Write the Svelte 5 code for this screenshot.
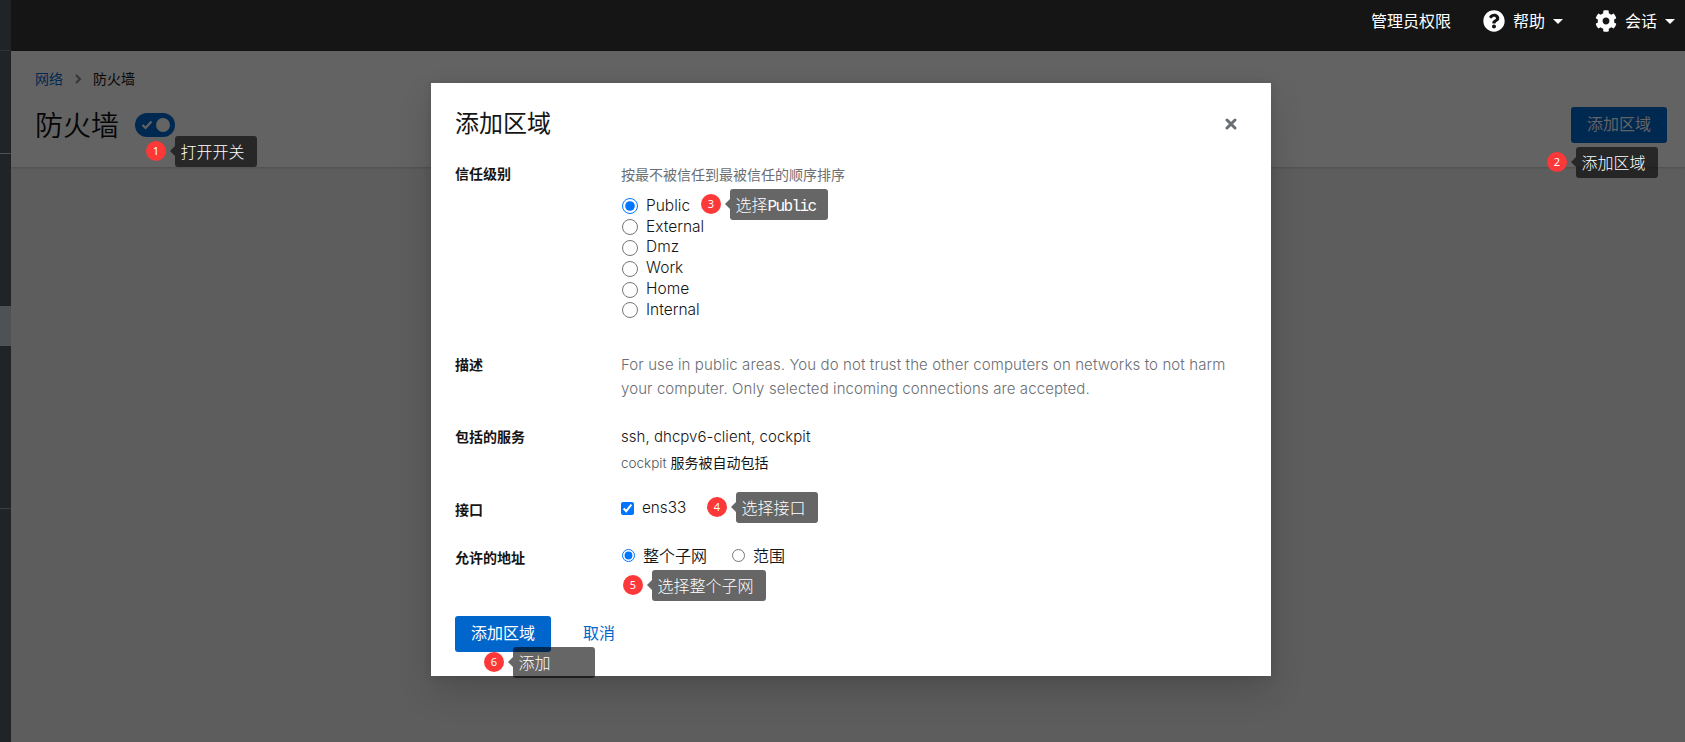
<script lang="ts">
	const zones = ['Public', 'External', 'Dmz', 'Work', 'Home', 'Internal'];

	let zone = $state('Public');
	let ens33 = $state(true);
	let addresses = $state('subnet');

	// Numbered walkthrough markers: dot position, label offset and label width
	const steps = [
		{ n: 1, text: '打开开关', x: 146, y: 141, lx: 175, ly: 136, w: 82 },
		{ n: 2, text: '添加区域', x: 1547, y: 152, lx: 1576, ly: 147, w: 82 },
		{ n: 3, text: '选择', latin: 'Public', x: 701, y: 194, lx: 730, ly: 189, w: 98 },
		{ n: 4, text: '选择接口', x: 707, y: 497, lx: 736, ly: 492, w: 82 },
		{ n: 5, text: '选择整个子网', x: 623, y: 575, lx: 652, ly: 570, w: 114 },
		{ n: 6, text: '添加', x: 484, y: 652, lx: 513, ly: 647, w: 82 }
	];
</script>

<div class="app">
	<nav class="sidebar">
		<div class="nav-host"></div>
		<div class="nav-search"></div>
		<div class="nav-group"></div>
		<div class="nav-current"></div>
		<div class="nav-rest"></div>
		<div class="nav-tools"></div>
	</nav>

	<div class="main">
		<header class="masthead">
			<span class="item"><span>管理员权限</span></span>
			<span class="item">
				<svg width="22" height="22" viewBox="0 0 512 512" fill="#fff">
					<path d="M504 256c0 137-111 248-248 248S8 393 8 256 119 8 256 8s248 111 248 248zM262.700 90c-54.500 0-89.300 23-116.500 63.800-3.500 5.300-2.400 12.400 2.700 16.300l34.700 26.300c5.200 3.900 12.600 3 16.700-2.100 17.900-22.700 30.100-35.800 57.300-35.800 20.400 0 45.700 13.100 45.700 33 0 15-12.400 22.700-32.500 34C247.100 238.500 216 254.900 216 296v4c0 6.600 5.400 12 12 12h56c6.600 0 12-5.400 12-12v-1.300c0-28.500 83.200-29.600 83.200-106.700 0-58-60.200-102-116.500-102zM256 338c-25.400 0-46 20.600-46 46s20.600 46 46 46 46-20.600 46-46-20.600-46-46-46z" />
				</svg>
				<span>帮助</span>
				<i class="caret"></i>
			</span>
			<span class="item">
				<svg width="22" height="22" viewBox="0 0 512 512" fill="#fff">
					<path d="M487.400 315.700l-42.600-24.600c4.300-23.200 4.300-47 0-70.200l42.600-24.600c4.900-2.800 7.100-8.600 5.500-14-11.100-35.600-30-67.800-54.700-94.600-3.800-4.100-10-5.100-14.800-2.300L380.800 110c-17.900-15.400-38.500-27.300-60.800-35.100V25.800c0-5.600-3.900-10.500-9.400-11.700-36.700-8.200-74.300-7.800-109.200 0-5.500 1.200-9.400 6.100-9.400 11.700V75c-22.200 7.900-42.800 19.800-60.800 35.100L88.700 85.500c-4.900-2.800-11-1.900-14.800 2.300-24.700 26.700-43.600 58.900-54.700 94.600-1.700 5.400.6 11.200 5.500 14L67.300 221c-4.300 23.200-4.300 47 0 70.200l-42.600 24.600c-4.900 2.800-7.100 8.600-5.500 14 11.100 35.600 30 67.800 54.700 94.600 3.800 4.100 10 5.100 14.800 2.300l42.600-24.600c17.900 15.400 38.500 27.300 60.800 35.100v49.200c0 5.600 3.900 10.500 9.400 11.700 36.700 8.200 74.300 7.800 109.200 0 5.500-1.200 9.400-6.100 9.400-11.700v-49.200c22.200-7.900 42.800-19.800 60.800-35.100l42.600 24.600c4.900 2.800 11 1.900 14.800-2.300 24.700-26.700 43.600-58.900 54.700-94.600 1.500-5.500-.7-11.300-5.600-14.100zM256 336c-44.100 0-80-35.900-80-80s35.900-80 80-80 80 35.900 80 80-35.900 80-80 80z" />
				</svg>
				<span>会话</span>
				<i class="caret"></i>
			</span>
		</header>

		<section class="page-head">
			<div class="breadcrumb">
				<a href="#networking">网络</a>
				<svg width="8" height="10" viewBox="0 0 8 10">
					<path d="M2 1l4 4-4 4" fill="none" stroke="#343536" stroke-width="2" />
				</svg>
				<span>防火墙</span>
			</div>
			<div class="title-row">
				<h1>防火墙</h1>
				<span class="toggle">
					<svg width="12" height="10" viewBox="0 0 12 10">
						<path d="M1.500 5l3 3L10.500 1.500" fill="none" stroke="#646464" stroke-width="2.200" />
					</svg>
					<i class="knob"></i>
				</span>
				<button class="primary dimmed">添加区域</button>
			</div>
		</section>
	</div>
</div>

<div class="overlay">
	<div class="modal">
		<div class="modal-head">
			<h2>添加区域</h2>
			<svg width="12" height="12" viewBox="0 0 12 12">
				<path d="M2 2l8 8M10 2l-8 8" stroke="#6a6e73" stroke-width="3" stroke-linecap="round" />
			</svg>
		</div>

		<div class="row trust">
			<b>信任级别</b>
			<div>
				<div class="hint">按最不被信任到最被信任的顺序排序</div>
				<div class="zones">
					{#each zones as z}
						<label><input type="radio" name="zone" value={z} bind:group={zone} />{z}</label>
					{/each}
				</div>
			</div>
		</div>

		<div class="row desc">
			<b>描述</b>
			<p>
				For use in public areas. You do not trust the other computers on networks to not harm<br />
				your computer. Only selected incoming connections are accepted.
			</p>
		</div>

		<div class="row services">
			<b>包括的服务</b>
			<div>
				<div class="list">ssh, dhcpv6-client, cockpit</div>
				<div class="auto"><span>cockpit</span> 服务被自动包括</div>
			</div>
		</div>

		<div class="row interfaces">
			<b>接口</b>
			<label><input type="checkbox" bind:checked={ens33} />ens33</label>
		</div>

		<div class="row addresses">
			<b>允许的地址</b>
			<div class="inline">
				<label><input type="radio" name="addr" value="subnet" bind:group={addresses} />整个子网</label>
				<label><input type="radio" name="addr" value="range" bind:group={addresses} />范围</label>
			</div>
		</div>

		<footer>
			<button class="primary">添加区域</button>
			<button class="link">取消</button>
		</footer>
	</div>
</div>

{#each steps as s}
	<span class="dot" style="left: {s.x}px; top: {s.y}px">{s.n}</span>
	<span class="tip" style="left: {s.lx}px; top: {s.ly}px; width: {s.w}px">
		{s.text}{#if s.latin}<em>{s.latin}</em>{/if}
	</span>
{/each}

<style>
	:global(body) {
		overflow: hidden;
		font-family: Inter, 'Noto Sans CJK SC', sans-serif;
		color: #151515;
	}

	.app {
		display: flex;
		height: 742px;
		background: #5d5d5d;
	}

	.sidebar {
		width: 11px;
		display: flex;
		flex-direction: column;
		background: #212427;
	}
	.nav-host {
		height: 50px;
		border-bottom: 1px solid #303336;
	}
	.nav-search {
		height: 102px;
		border-bottom: 1px solid #4f5255;
	}
	.nav-group {
		height: 152px;
	}
	.nav-current {
		height: 40px;
		background: #4f5255;
	}
	.nav-rest {
		height: 162px;
		border-bottom: 1px solid #3c3f42;
	}

	.main {
		flex: 1;
	}

	.masthead {
		height: 51px;
		box-sizing: border-box;
		padding: 10px 10px 0 0;
		display: flex;
		justify-content: flex-end;
		gap: 32px;
		background: #151515;
		color: #fff;
		font-size: 16px;
	}
	.item {
		height: 22px;
		display: flex;
		align-items: center;
	}
	.item span {
		padding-bottom: 3px;
	}
	.item svg {
		margin-right: 8px;
	}
	.caret {
		margin-left: 8px;
		border: 5px solid transparent;
		border-top: 5px solid #fff;
		border-bottom: 0;
	}

	.page-head {
		height: 116px;
		box-sizing: border-box;
		padding: 17px 18px 0 24px;
		background: #636363;
		box-shadow: 0 1px 2px rgba(0, 0, 0, 0.15);
	}
	.breadcrumb {
		display: flex;
		align-items: center;
		height: 20px;
		font-size: 14px;
		color: #090909;
	}
	.breadcrumb a {
		color: #002952;
		text-decoration: none;
	}
	.breadcrumb svg {
		margin: 2px 11px 0;
	}
	.title-row {
		display: flex;
		align-items: center;
		height: 36px;
		margin-top: 19px;
	}
	h1 {
		margin: 0;
		padding-top: 2px;
		font-size: 28px;
		line-height: 36px;
		font-weight: 350;
		color: #060606;
	}
	.toggle {
		width: 40px;
		height: 24px;
		box-sizing: border-box;
		margin-left: 16px;
		padding: 0 5px 0 6px;
		display: flex;
		align-items: center;
		justify-content: space-between;
		border-radius: 12px;
		background: #002952;
	}
	.knob {
		width: 14px;
		height: 14px;
		border-radius: 50%;
		background: #646464;
	}

	button {
		font-family: inherit;
		font-size: 16px;
		border: 0;
		padding: 0 0 4px;
	}
	.primary {
		width: 96px;
		height: 36px;
		border-radius: 3px;
		background: #06c;
		color: #fff;
	}
	.dimmed {
		margin-left: auto;
		background: #002952;
		color: #636363;
	}

	.overlay {
		position: absolute;
		inset: 0;
		display: flex;
		align-items: flex-start;
		padding: 83px 0 0 431px;
	}
	.modal {
		width: 840px;
		height: 593px;
		box-sizing: border-box;
		padding: 24px;
		background: #fff;
		box-shadow: 0 16px 32px rgba(3, 3, 3, 0.16), 0 0 8px rgba(3, 3, 3, 0.1);
	}
	.modal-head {
		display: flex;
		align-items: center;
		justify-content: space-between;
		height: 32px;
		padding-right: 10px;
	}
	.modal-head svg {
		margin-top: 2px;
	}
	h2 {
		margin: 0;
		padding-top: 2px;
		font-size: 24px;
		line-height: 32px;
		font-weight: 400;
	}

	.row {
		display: grid;
		grid-template-columns: 166px 1fr;
		align-items: start;
		font-size: 16px;
	}
	.row b {
		font-size: 14px;
		line-height: 21px;
	}
	.row label {
		display: flex;
		align-items: center;
		font-weight: 350;
	}
	input {
		margin: 0;
	}

	.trust {
		height: 191px;
		padding-top: 24px;
	}
	.hint {
		font-size: 14px;
		line-height: 23px;
		color: #6a6e73;
	}
	.zones {
		padding-top: 9px;
	}
	.zones label {
		height: 20.800px;
		font-size: 15.500px;
	}
	.zones input {
		width: 16px;
		height: 16px;
		margin: 2px 8px 0 1px;
	}

	.desc {
		height: 72px;
	}
	.desc p {
		margin: -1px 0 0;
		font-size: 15px;
		font-weight: 350;
		letter-spacing: 0.100px;
		line-height: 24px;
		white-space: nowrap;
		color: #6a6e73;
	}

	.services {
		height: 73px;
	}
	.services .list {
		margin-top: -1px;
		font-size: 15px;
		font-weight: 350;
		letter-spacing: 0.040px;
		line-height: 24px;
	}
	.auto {
		margin-top: 3px;
		font-size: 14px;
		line-height: 21px;
	}
	.auto span {
		color: #4f5255;
		font-size: 13.500px;
		font-weight: 300;
	}

	.interfaces {
		height: 48px;
	}
	.interfaces label {
		margin-top: -1px;
		font-size: 15.300px;
		line-height: 20px;
	}
	.interfaces input {
		width: 13px;
		height: 13px;
		margin-right: 8px;
	}

	.inline {
		display: flex;
		gap: 24px;
		margin-top: -4px;
	}
	.inline input {
		width: 13px;
		height: 13px;
		margin: 0 8px 0 1px;
	}
	.addresses {
		height: 69px;
	}

	footer {
		display: flex;
		align-items: center;
	}
	.link {
		margin-left: 32px;
		background: none;
		color: #06c;
	}

	.dot {
		position: absolute;
		width: 20px;
		height: 20px;
		border-radius: 50%;
		background: #fd3838;
		color: #fff;
		font: 11px/19px 'Noto Sans', sans-serif;
		text-align: center;
	}
	.tip {
		position: absolute;
		height: 31px;
		box-sizing: border-box;
		padding-left: 5.500px;
		border-radius: 3px;
		background: rgba(0, 0, 0, 0.6);
		color: #fff;
		font-size: 16px;
		font-weight: 300;
		line-height: 32px;
		white-space: nowrap;
	}
	.tip::before {
		content: '';
		position: absolute;
		left: -5px;
		top: 10px;
		border: 5px solid transparent;
		border-right-color: rgba(0, 0, 0, 0.6);
		border-left: 0;
	}
	.tip em {
		font-family: 'Liberation Mono', monospace;
		font-style: normal;
		letter-spacing: -1.600px;
	}
</style>
